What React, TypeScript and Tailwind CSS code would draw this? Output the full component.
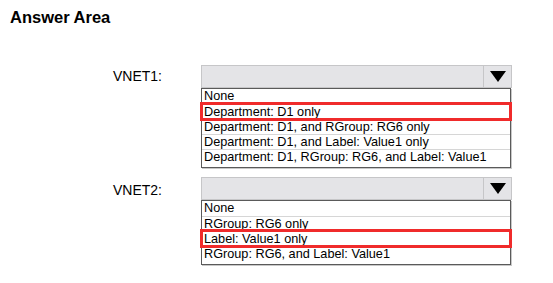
const vnet1 = [
  "None",
  "Department: D1 only",
  "Department: D1, and RGroup: RG6 only",
  "Department: D1, and Label: Value1 only",
  "Department: D1, RGroup: RG6, and Label: Value1",
];

const vnet2 = [
  "None",
  "RGroup: RG6 only",
  "Label: Value1 only",
  "RGroup: RG6, and Label: Value1",
];

function Dropdown({ options, selected }: { options: string[]; selected: number }) {
  return (
    <div className="w-[311px] flex flex-col">
      {/* closed select header */}
      <div className="h-[23px] border border-[#c6c6c8] bg-[#e4e4e7] flex justify-end">
        <div className="w-[28px] border-l border-[#c6c6c8] flex items-center justify-center">
          <svg width="16" height="11" viewBox="0 0 16 11">
            <polygon points="0,0 16,0 8,11" fill="#000" />
          </svg>
        </div>
      </div>
      {/* open list */}
      <div className="w-[310px] border border-[#5a5a5a] bg-white pb-[3px] shadow-[1px_1px_0_#c8c8c8]">
        {options.map((opt, i) => (
          <div
            key={opt}
            className={`h-[15px] leading-[14px] text-[12.7px] pl-[2px] whitespace-nowrap ${
              i > 0 ? "border-t border-[#d6d6d6]" : ""
            } ${i === selected ? "outline-3 outline-solid outline-[#f02b2b] outline-offset-[-1px] relative" : ""}`}
          >
            {opt}
          </div>
        ))}
      </div>
    </div>
  );
}

export default function App() {
  return (
    <div className="w-[553px] h-[283px] bg-white text-black font-['Liberation_Sans',Arial,sans-serif] pl-[10px] pt-[8px]">
      <h1 className="text-[16.5px] leading-[19px] font-bold">Answer Area</h1>
      <div className="mt-[38px] flex flex-col gap-[9px]">
        <div className="flex">
          <div className="w-[191px] pl-[103px] h-[23px] flex items-center text-[14px]">VNET1:</div>
          <Dropdown options={vnet1} selected={1} />
        </div>
        <div className="flex">
          <div className="w-[191px] pl-[103px] h-[23px] flex items-center pt-[3px] text-[14px]">VNET2:</div>
          <Dropdown options={vnet2} selected={2} />
        </div>
      </div>
    </div>
  );
}
